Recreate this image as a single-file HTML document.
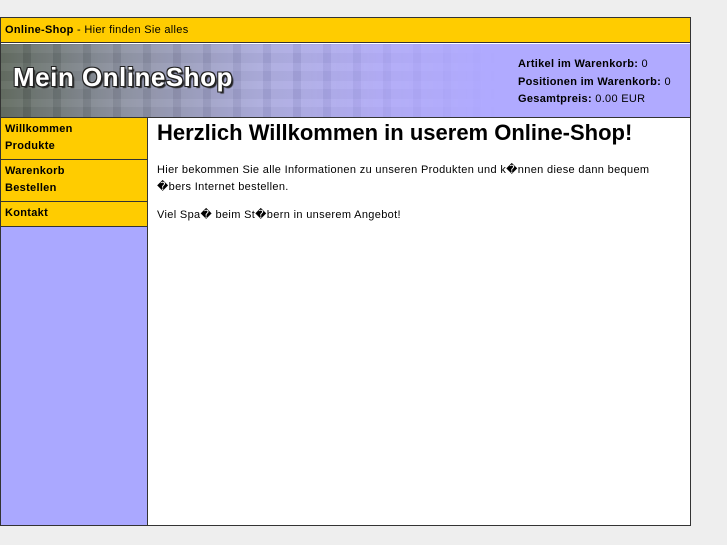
<!DOCTYPE html>
<html><head><meta charset="utf-8"><style>
body{margin:0;background:#eeeeee;font-family:"Liberation Sans","DejaVu Sans",sans-serif;font-size:11px;color:#000;width:727px;height:545px;overflow:hidden;position:relative}
#box{position:absolute;left:0;top:17px;width:689px;height:507px;border:1px solid #333;background:#fff}
#top{position:absolute;left:0;top:0;width:689px;height:25px;background:#ffcc00;border-bottom:1px solid #333;line-height:24px;font-size:11px;padding-left:4px;box-sizing:border-box;letter-spacing:.3px}
#hdr{position:absolute;left:0;top:26px;width:689px;height:73px;background:linear-gradient(90deg,#5a6458 0%,#8a8fa0 18%,#a8a8dc 38%,#b0aaf6 55%,#b0aaff 70%,#b0aaff 100%);border-bottom:1px solid #333;overflow:hidden}
#keys{position:absolute;left:0;top:0;width:500px;height:73px;opacity:.5;background:repeating-linear-gradient(90deg,rgba(255,255,255,.12) 0 22px,rgba(0,0,0,.08) 22px 30px),repeating-linear-gradient(0deg,rgba(0,0,0,.06) 0 10px,rgba(255,255,255,.08) 10px 18px);-webkit-mask-image:linear-gradient(90deg,#000 60%,transparent)}
#logo{position:absolute;left:12px;top:18px;font-size:26px;font-weight:bold;color:#fff;letter-spacing:.5px;text-shadow:-1px -1px 0 #222,1px -1px 0 #222,-1px 1px 0 #222,1px 1px 0 #222,2px 2px 1px #222}
#cart{position:absolute;left:517px;top:12px;line-height:17.5px;font-size:11px;letter-spacing:.3px}
#side{position:absolute;left:0;top:100px;width:146px;height:407px;background:#aaa8ff;border-right:1px solid #333}
.grp{background:#ffcc00;border-bottom:1px solid #333;padding:3px 4px 4px;font-weight:bold;line-height:17px;letter-spacing:.3px}
#main{position:absolute;left:156px;top:100px;width:530px;letter-spacing:.34px}
h1{font-size:22px;margin:2px 0 0;font-weight:bold;letter-spacing:0}
p{margin:0;line-height:17px}
</style></head><body>
<div id="box">
<div id="top"><b>Online-Shop</b> - Hier finden Sie alles</div>
<div id="hdr"><div id="keys"></div><div id="logo">Mein OnlineShop</div>
<div id="cart"><b>Artikel im Warenkorb:</b> 0<br><b>Positionen im Warenkorb:</b> 0<br><b>Gesamtpreis:</b> 0.00 EUR</div></div>
<div id="side">
<div class="grp">Willkommen<br>Produkte</div>
<div class="grp">Warenkorb<br>Bestellen</div>
<div class="grp">Kontakt</div>
</div>
<div id="main">
<h1>Herzlich Willkommen in userem Online-Shop!</h1>
<p style="margin-top:16px">Hier bekommen Sie alle Informationen zu unseren Produkten und k�nnen diese dann bequem<br>�bers Internet bestellen.</p>
<p style="margin-top:11px">Viel Spa� beim St�bern in unserem Angebot!</p>
</div>
</div>
</body></html>
